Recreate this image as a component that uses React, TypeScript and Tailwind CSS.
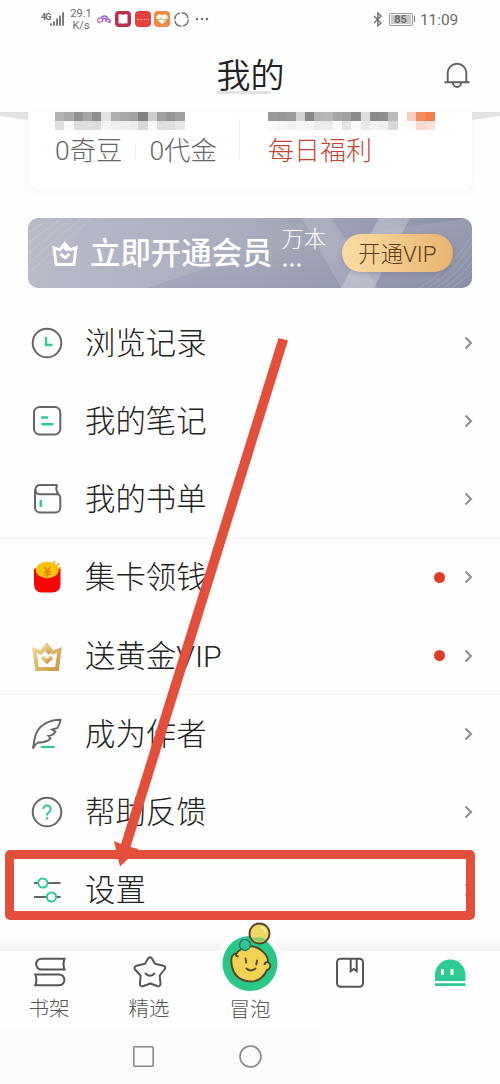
import type { ReactNode } from 'react';

const GREEN = '#2ccb91';
const GRAY = '#666';

const mosaicLeft = [
  ['#b2b2b2', '#dedede'], ['#aaaaaa', '#f8f8f8'], ['#919191', '#dddddd'], ['#a6a6a6', '#dfdfdf'],
  ['#8e8e8e', '#dcdcdc'], ['#e2e2e2', '#f4f4f4'], ['#adadad', '#efefef'], ['#a9a9a9', '#efefef'],
  ['#a2a2a2', '#ededed'], ['#828282', '#d8d8d8'], ['#cccccc', '#f8f8f8'], ['#a1a1a1', '#dedede'],
  ['#959595', '#e0e0e0'], ['#a0a0a0', '#e6e6e6'],
];

const mosaicRight = [
  ['#999999', '#fafafa'], ['#979797', '#f6f6f6'], ['#9b9b9b', '#f2f2f2'], ['#d2d2d2', '#f6f6f6'],
  ['#888888', '#f6f6f6'], ['#b4b4b4', '#ececec'], ['#b6b6b6', '#ececec'], ['#a5a5a5', '#f8f8f8'],
  ['#a0a0a0', '#e4e4e4'], ['#8b8b8b', '#f8f8f8'], ['#dddddd', '#e9e9e9'], ['#8a8a8a', '#f2f2f2'],
  ['#8d8d8d', '#efefef'], ['#bcbcbc', '#d8d8d8'], ['#ffffff', '#ffffff'], ['#f7cdbc', '#fff7f5'],
  ['#f48a5f', '#fbd9d0'], ['#f57c50', '#fce0da'],
];

function Mosaic({ cells }: { cells: string[][] }) {
  return (
    <div className="flex h-[18px]">
      {cells.map(([top, bottom], i) => (
        <div key={i} className="w-[9.27px]">
          <div className="h-[9px]" style={{ background: top }} />
          <div className="h-[9px]" style={{ background: bottom }} />
        </div>
      ))}
    </div>
  );
}

function StatusBar() {
  return (
    <div className="flex h-[38px] items-center pl-[41px] pr-[40px] font-[Roboto,sans-serif] font-normal text-[#6b6b6b]">
      <div className="flex w-[24px] items-end">
        <div className="-mr-px mb-[5px] w-[10px] text-[9px] leading-[9px] font-bold tracking-[-1px]">4G</div>
        <svg width="16" height="16" viewBox="0 0 16 16" fill="#777">
          <rect x="0" y="12.5" width="2" height="2.5" />
          <rect x="3.2" y="10.5" width="2" height="4.5" />
          <rect x="6.4" y="7.5" width="2" height="7.5" />
          <rect x="9.4" y="4.5" width="2" height="10.5" />
          <rect x="12.6" y="1" width="2" height="14" />
        </svg>
      </div>
      <div className="ml-[5px] w-[22px] pt-px text-center text-[11px] leading-[12px]">
        29.1<br />K/s
      </div>
      <svg className="ml-[5px]" width="15" height="16" viewBox="0 0 15 16" fill="none" strokeWidth="1.5">
        <path d="M4 10.500a2 2 0 1 1-.5-3" stroke="#d8798f" />
        <path d="M4 7.500a3.400 3.400 0 0 1 6.600 0" stroke="#7a6fd0" />
        <path d="M5.500 11V9a1.700 1.700 0 0 1 3.400 0v2M9 9q3-2.500 4.300 2H10.500" stroke="#a35fcb" />
      </svg>
      <div className="ml-[3px] flex h-4 w-4 items-center justify-center rounded-[4px] bg-[#b9304f]">
        <svg width="12" height="12" viewBox="0 0 12 12">
          <path d="M1.500 1.500Q4 .8 6 1.800Q8 .8 10.500 1.500V10.500Q8 10 6 10.800Q4 10 1.500 10.500Z" fill="#fff" />
        </svg>
      </div>
      <div className="ml-[3.500px] flex h-4 w-4 items-center justify-center rounded-[4px] bg-[#e8403f]">
        <div className="w-3 border-t border-dotted border-[#ffc7b0]" />
      </div>
      <div className="ml-[3.500px] flex h-4 w-4 items-center justify-center rounded-[4px] bg-[#ee8a45]">
        <svg width="14" height="14" viewBox="0 0 14 14">
          <path d="M7 12.500L2 7.500C-.5 4 4 .3 7 3.500C10 .3 14.500 4 12 7.500Z" fill="#fff6e8" />
          <path d="M2 7.500h2.500l2-1.500 2 2.500 1-1H12" stroke="#8cbf9a" fill="none" />
        </svg>
      </div>
      <svg className="ml-[3px]" width="17" height="17" viewBox="0 0 17 17" fill="none" stroke="#6f6f6f" strokeWidth="1.400">
        <circle cx="8.500" cy="8.500" r="6.700" strokeDasharray="9 1.500" />
      </svg>
      <svg className="ml-[5px]" width="14" height="4" viewBox="0 0 14 4" fill="#6b6b6b">
        <circle cx="2" cy="2" r="1.200" /><circle cx="7" cy="2" r="1.200" /><circle cx="12" cy="2" r="1.200" />
      </svg>
      <div className="ml-auto flex items-center">
        <svg width="10" height="15" viewBox="0 0 10 15" fill="none" stroke="#6b6b6b" strokeWidth="1.300">
          <path d="M1 4l7 7-3.200 3V1L8 4l-7 7" />
        </svg>
        <div className="ml-[6px] flex h-[13px] w-[24px] items-center rounded-[2px] border border-[#999] p-px">
          <div className="flex h-full w-[20px] items-center justify-center bg-[#c9c9c9] text-[11px] leading-none font-bold text-[#666]">85</div>
        </div>
        <div className="ml-px h-[6px] w-[1.500px] bg-[#777]" />
        <div className="ml-[5px] w-[40px] pt-[3px] text-[15.500px] leading-none tracking-[-0.1px]">11:09</div>
      </div>
    </div>
  );
}

function Header() {
  return (
    <div className="flex h-[74px] items-center justify-between pl-[30px] pr-[43px]">
      <div className="w-7" />
      <h1 className="relative mt-px text-[34px] leading-[40px] font-[350] text-[#222]">
        我的
        <div className="absolute left-0 right-[14px] bottom-[2px] -z-10 h-[3px] rounded-full bg-[#e2e2e2]" />
      </h1>
      <svg className="-mr-[14px] -mt-px" width="28" height="30" viewBox="0 0 28 30" fill="none" stroke="#606060" strokeWidth="1.900">
        <path d="M4.700 22V13a9.300 9.300 0 0 1 18.600 0v9M1.500 22.300h25M10 23a4 4 0 0 0 8 0" />
      </svg>
    </div>
  );
}

function WalletCard() {
  return (
    <div className="flex h-[106px] items-start justify-between">
      <svg width="28" height="10" viewBox="0 0 28 10"><path d="M0 0H28V8L0 4Z" fill="#e3e3e3" /></svg>
      <div className="flex h-[78px] w-[444px] rounded-b-[10px] bg-white pl-[27px] shadow-[0_2px_7px_rgba(0,0,0,0.035)]">
        <div className="w-[213px] text-[#666]">
          <Mosaic cells={mosaicLeft} />
          <div className="mt-[6px] flex h-[30px] items-center text-[26.400px] leading-[30px] whitespace-nowrap">
            <span>0奇豆</span>
            <i className="mx-[13px] h-4 w-px bg-[#f0f0f0]" />
            <span>0代金</span>
            <i className="-mt-6 ml-[22px] h-[40px] w-px bg-[#f1f1f1]" />
          </div>
        </div>
        <div className="text-[#c8432f]">
          <Mosaic cells={mosaicRight} />
          <div className="mt-[6px] text-[26px] leading-[30px] whitespace-nowrap">每日福利</div>
        </div>
      </div>
      <svg width="28" height="10" viewBox="0 0 28 10"><path d="M0 0H28V4L0 8Z" fill="#e3e3e3" /></svg>
    </div>
  );
}

function Crown({ size, color, stroke }: { size: number; color: string; stroke: number }) {
  return (
    <svg width={size} height={size} viewBox="0 0 34 34" fill="none" stroke={color} strokeWidth={stroke}>
      <defs>
        <linearGradient id="gold" x1="0" y1="0" x2="1" y2="1">
          <stop offset="0" stopColor="#ecd596" />
          <stop offset="1" stopColor="#c99b43" />
        </linearGradient>
      </defs>
      <path d="M4.500 11L11 13.500L16.800 6.500L23 13.500L29.500 11L27 30H7Z" />
      <path d="M12 18L17 22.500L22 18" />
      <path d="M14 8L20 14.500" />
    </svg>
  );
}

function VipBanner() {
  return (
    <div className="relative mx-[28px] flex h-[70px] items-center overflow-hidden rounded-[10px] bg-linear-to-r from-[#b9bbc9] via-[#a9acbc] to-[#8b90a5] pl-[22px] text-white">
      <svg className="absolute inset-0" width="444" height="70" viewBox="0 0 444 70" fill="none">
        <defs>
          <linearGradient id="shade" x1="0" y1="0" x2="0" y2="1">
            <stop offset="0" stopColor="#b8b9c6" stopOpacity="0.300" />
            <stop offset="1" stopColor="#858ba3" stopOpacity="0.300" />
          </linearGradient>
        </defs>
        <path d="M120 70Q240 25 444 0V70Z" fill="url(#shade)" />
        <path d="M274 0H303L350 70H313Z" fill="#fff" opacity="0.130" />
        <path d="M351 0H382L346 70H313Z" fill="#fff" opacity="0.250" />
        <g stroke="#fff" opacity="0.170">
          <path d="M0 15L22 0M0 25L34 0M0 35L44 0M0 45L54 0M0 55L64 0" />
          <path d="M392 70Q424 50 444 18M400 70Q428 52 444 26M408 70Q431 55 444 35M416 70Q434 58 444 44M424 70Q437 61 444 53" />
        </g>
      </svg>
      <div className="relative flex w-full items-center">
        <Crown size={30} color="#fff" stroke={3.2} />
        <span className="mt-[2px] ml-[10px] text-[30.400px] leading-[40px] font-medium whitespace-nowrap">立即开通会员</span>
        <div className="ml-[9px] w-[47px] text-[22.500px] leading-[24px]">
          <div className="-mt-[5px]">万本</div>
          <svg width="24" height="18" viewBox="0 0 24 18" fill="#fff" className="mt-[5px] block">
            <circle cx="4" cy="9" r="1.700" /><circle cx="11" cy="9" r="1.700" /><circle cx="18" cy="9" r="1.700" />
          </svg>
        </div>
        <div className="ml-[14px] flex h-[38px] w-[111px] items-center justify-center rounded-full bg-linear-to-r from-[#fbdca4] to-[#e8b570] pt-[2px] pr-px text-[22.300px] leading-none text-[#5b3d18] shadow-[0_2px_4px_rgba(80,80,110,0.250)]">
          开通VIP
        </div>
      </div>
    </div>
  );
}

function LineIcon({ children }: { children: ReactNode }) {
  return (
    <svg width="34" height="34" viewBox="0 0 34 34" fill="none" stroke={GRAY} strokeWidth="2">
      {children}
    </svg>
  );
}

const menu: { label: string; icon: ReactNode; dot?: boolean; divider?: boolean }[] = [
  {
    label: '浏览记录',
    icon: (
      <LineIcon>
        <circle cx="17" cy="17" r="14.300" />
        <path d="M16 11v8h6.500" stroke={GREEN} strokeWidth="2.400" />
      </LineIcon>
    ),
  },
  {
    label: '我的笔记',
    icon: (
      <LineIcon>
        <rect x="4" y="3" width="26.300" height="27.500" rx="5.500" />
        <path d="M11 13.500h7M11.500 20.300h11.800" stroke={GREEN} strokeWidth="2.400" />
      </LineIcon>
    ),
  },
  {
    label: '我的书单',
    icon: (
      <LineIcon>
        <path d="M27.500 3H9.500a4.700 4.700 0 0 0 0 9.300H27a3.300 3.300 0 0 1 3.300 3.300V25.500a5 5 0 0 1-5 5H10a5 5 0 0 1-5-5V7.500M27.500 3q-3 4.500 1.200 9.500" />
        <path d="M10.800 18v7" stroke={GREEN} strokeWidth="2.400" />
      </LineIcon>
    ),
    divider: true,
  },
  {
    label: '集卡领钱',
    dot: true,
    icon: (
      <svg width="34" height="34" viewBox="0 0 34 34">
        <path d="M4 9Q17 2 30.500 9V24Q30.500 32.500 22 32.500H12Q4 32.500 4 24Z" fill="#f90505" />
        <ellipse cx="17.300" cy="10" rx="11.500" ry="8.300" fill="#fbc30c" />
        <path d="M14.500 7l3 4 3-4M17.500 11v6M14 12h7M14 14.500h7" stroke="#dd7f15" strokeWidth="1.300" fill="none" />
        <path d="M23 4l2-3M26.500 6l3-3M28.500 8.500l2.500-1" stroke="#f2aa24" strokeWidth="1.400" />
      </svg>
    ),
  },
  { label: '送黄金VIP', dot: true, divider: true, icon: <Crown size={34} color="url(#gold)" stroke={4} /> },
  {
    label: '成为作者',
    icon: (
      <LineIcon>
        <path d="M2.800 31.500C5 24 3.500 17 10 10.500Q17 3 30.500 2.700Q30 7 27.500 11L22 12.500L25.500 14.500Q22.500 19 18.500 19L20.500 21.500Q15.500 26 8 25.500Q5 27 2.800 31.500Z" strokeWidth="1.900" />
        <path d="M11 30h13.500" stroke={GREEN} strokeWidth="2.200" />
      </LineIcon>
    ),
  },
  {
    label: '帮助反馈',
    icon: (
      <LineIcon>
        <circle cx="17" cy="17" r="14.300" />
        <path d="M13.300 14a3.700 3.700 0 1 1 5.700 3.200q-2 1.300-2 3.300" stroke={GREEN} />
        <path d="M17 22.300v2.300" stroke={GREEN} />
      </LineIcon>
    ),
  },
  {
    label: '设置',
    icon: (
      <LineIcon>
        <path d="M4 10h4M17 10h13.500M4 24h12.500M26 24h4.500" />
        <circle cx="12.800" cy="10" r="4.600" stroke={GREEN} />
        <circle cx="21.500" cy="24" r="4.600" stroke={GREEN} />
      </LineIcon>
    ),
  },
];

function MenuList() {
  return (
    <ul className="mt-[16px]">
      {menu.map((item) => (
        <li
          key={item.label}
          className={'flex h-[78.250px] items-center pl-[30px] pr-[26.500px] border-b ' + (item.divider ? 'border-[#f3f3f3]' : 'border-transparent')}
        >
          {item.icon}
          <span className="mt-[2px] ml-[21px] text-[30.400px] leading-[40px] text-[#222]">{item.label}</span>
          {item.dot && <span className="ml-auto h-[11px] w-[11px] rounded-full bg-[#df3c25]" />}
          <svg className={item.dot ? 'ml-[18px]' : 'ml-auto'} width="11" height="14" viewBox="0 0 11 14" fill="none" stroke="#8c8c8c" strokeWidth="2">
            <path d="M2.500 1.500L8 7L2.500 12.500" />
          </svg>
        </li>
      ))}
    </ul>
  );
}

function TabBar() {
  return (
    <div className="relative grid h-[78px] grid-cols-5 bg-[#fefefe] text-[20.500px] leading-[26px] text-[#555]">
      <div className="absolute inset-x-0 -top-[13px] h-[13px] bg-linear-to-b from-transparent to-[#f3f3f3]" />
      <div className="flex flex-col items-center pt-[5px]">
        <svg width="34" height="32" viewBox="0 0 34 32" fill="none" stroke="#555" strokeWidth="2">
          <path d="M31.500 2.700H8.500a5.300 5.300 0 0 0 0 10.800H31.500Q29.500 8 31.500 2.700Z" />
          <path d="M2.300 18.500H26a5.300 5.300 0 0 1 0 10.800H2.300Q4.500 24 2.300 18.500Z" />
        </svg>
        <span className="mt-[8px] -ml-[2px]">书架</span>
      </div>
      <div className="flex flex-col items-center pt-[5px]">
        <svg width="34" height="32" viewBox="0 0 34 32" fill="none" stroke="#555" strokeWidth="2" strokeLinejoin="round">
          <path d="M15.200 2.300Q17 .3 18.800 2.300L22 7.800L30.500 9.800Q33.500 11 31.500 13.500L26.700 19.500L27.500 28Q27 31 24 30L17.500 27.500L10.500 30Q7 31 7 28L7.600 19.500L2 13.500Q.5 11 3.500 9.800L12 7.800Z" />
          <path d="M12.500 17.500Q17 22 21.500 17.500" strokeLinecap="round" />
        </svg>
        <span className="mt-[8px] -ml-[2px]">精选</span>
      </div>
      <div className="relative flex flex-col items-center">
        <svg className="-mt-[30px] shrink-0" width="64" height="74" viewBox="0 0 64 74" fill="none" stroke="#51482e" strokeWidth="1.900">
          <circle cx="32" cy="43" r="33" fill="#fefefe" stroke="none" />
          <circle cx="32" cy="42.500" r="27.500" fill="#29c888" stroke="none" />
          <path d="M14 35.500Q16 32 18 33Q20 30 24 27.500Q38 21 48 34Q50 37 50 41Q53 43 52 46Q51 49 49 49Q44 60.500 32 60.500Q16 59.500 13.500 43Q13 38 14 35.500Z" fill="#f4d354" />
          <path d="M17.500 33Q18 36 20.500 35M46.500 44Q46.500 41 50 41" />
          <path d="M27.500 37.500l.7 4M39 39.500l-.7 4M28.500 47.500Q33 51.500 37.500 47.500" strokeLinecap="round" />
          <circle cx="27" cy="24" r="5.400" fill="#35c49a" stroke="#287a58" strokeWidth="1.500" />
          <circle cx="41.500" cy="12.500" r="10" fill="#f0d763" />
          <path d="M34 17.500Q41 14.500 48 18.500Q42 24 34 17.500Z" fill="#8fc96c" stroke="none" />
          <path d="M43 6q4 1 4.500 5" stroke="#fff3ae" />
        </svg>
        <span className="mt-[2px]">冒泡</span>
      </div>
      <div className="flex justify-center pt-[6px]">
        <svg width="32" height="32" viewBox="0 0 32 32" fill="none" stroke="#555" strokeWidth="2">
          <rect x="3" y="1.700" width="26" height="28" rx="3.500" />
          <path d="M16.700 2v12.200l3-2.200 3 2.200V2" />
        </svg>
      </div>
      <div className="flex justify-center pt-[5px]">
        <svg width="34" height="32" viewBox="0 0 34 32" fill={GREEN}>
          <path d="M2 24.500V18a15.300 15.800 0 0 1 30.500 0v6.500q-1 .5-2 .5h-26.500q-1.500 0-2-.5Z" />
          <rect x="2" y="27.300" width="30.500" height="2.700" rx="0.500" />
          <path d="M8 13h3v6H8zM17.500 13h3v6h-3z" fill="#fff" />
        </svg>
      </div>
    </div>
  );
}

function SystemNav() {
  return (
    <div className="flex h-[55px]">
      <div className="flex w-[320px] items-center justify-end bg-[#fbfbfb] pr-[58.500px]">
        <svg width="21" height="21" viewBox="0 0 21 21" fill="none" stroke="#888" strokeWidth="1.600">
          <rect x="0.800" y="0.800" width="19.400" height="19.400" rx="1" />
        </svg>
        <svg className="ml-[85px]" width="23" height="23" viewBox="0 0 23 23" fill="none" stroke="#888" strokeWidth="1.600">
          <circle cx="11.500" cy="11.500" r="10.500" />
        </svg>
      </div>
    </div>
  );
}

export default function App() {
  return (
    <div className="relative isolate h-[1084px] w-[500px] overflow-hidden bg-[#fefefe] font-[Roboto,'Noto_Sans_CJK_SC',sans-serif] font-light">
      <StatusBar />
      <Header />
      <WalletCard />
      <VipBanner />
      <MenuList />
      <div className="h-[21px]" />
      <TabBar />
      <SystemNav />

      {/* callout: frame around the settings row and the arrow pointing at it */}
      <div className="absolute left-[5px] top-[850px] h-[70px] w-[470px] rounded-[5px] border-[9px] border-[#e44f3c]" />
      <svg className="absolute left-0 top-0" width="500" height="1084" viewBox="0 0 500 1084" fill="#e44f3c">
        <path d="M278.500 338L288 340.500L130.500 847L138.500 849L120 866.500L114 841L121 844Z" />
      </svg>
    </div>
  );
}
